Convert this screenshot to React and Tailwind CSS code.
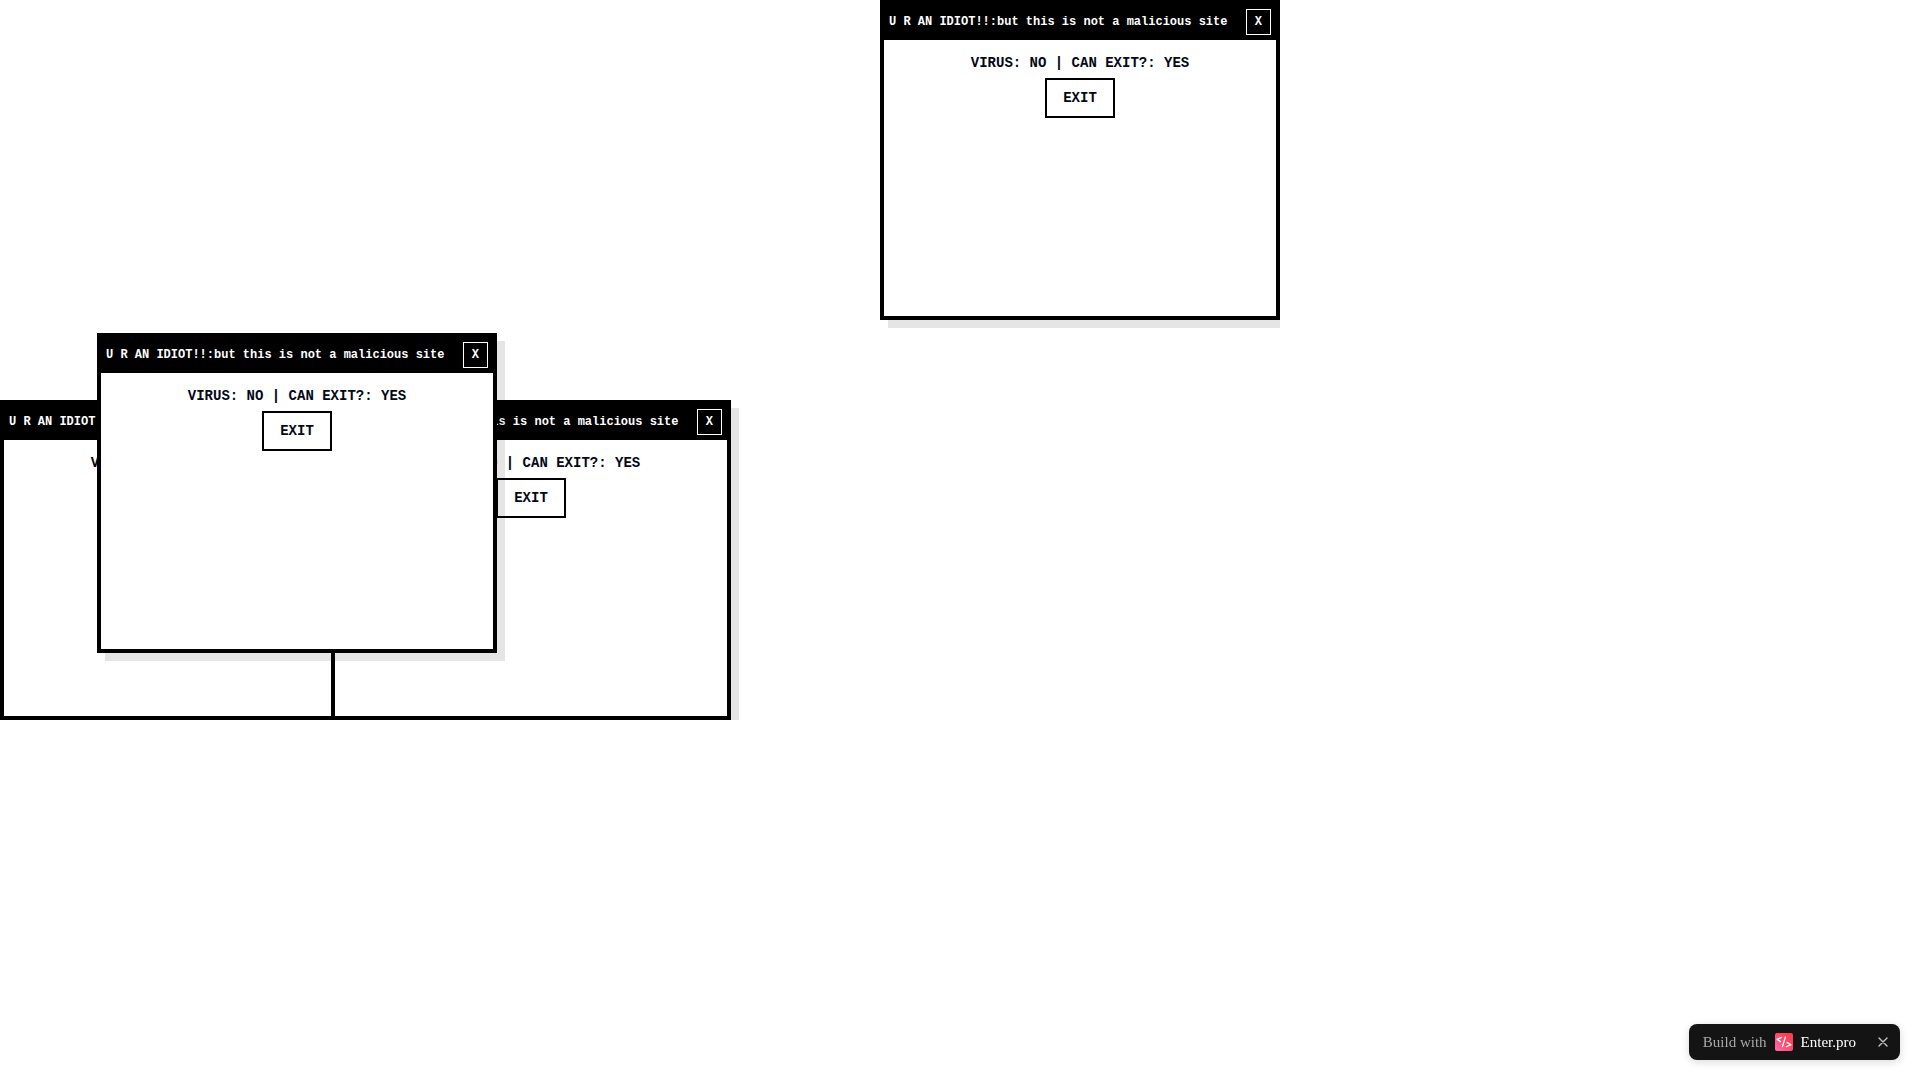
import React, { useState } from "react";

const POPUPS = [
  { id: 1, x: 0, y: 400 },
  { id: 2, x: 331, y: 400 },
  { id: 3, x: 97, y: 333 },
  { id: 4, x: 880, y: 0 },
];

const PopupWindow = ({ popup, onClose }) => {
  return (
    <section
      style={{ left: popup.x, top: popup.y }}
      className="absolute w-[400px] h-80 flex flex-col border-4 border-black bg-white shadow-[8px_8px_0_rgba(0,0,0,0.1)]"
    >
      <header className="flex items-center justify-between bg-black p-[5px] text-xs font-bold text-white">
        <h2>U R AN IDIOT!!:but this is not a malicious site</h2>
        <button
          type="button"
          onClick={onClose}
          className="border border-white px-2 py-1"
        >
          X
        </button>
      </header>
      <div className="flex-1 flex flex-col items-center gap-1 p-3 text-sm font-bold text-[#020817]">
        <p className="leading-[22px]">VIRUS: NO | CAN EXIT?: YES</p>
        <button
          type="button"
          onClick={onClose}
          className="border-2 border-black bg-white px-4 py-2"
        >
          EXIT
        </button>
      </div>
    </section>
  );
};

const EnterLogo = () => (
  <svg viewBox="0 0 18 18" className="size-[18px]" aria-hidden="true">
    <defs>
      <linearGradient id="enter-logo" x1="0" y1="1" x2="1" y2="0">
        <stop offset="0" stopColor="#ff6fb0" />
        <stop offset="0.5" stopColor="#ff4b6e" />
        <stop offset="1" stopColor="#ff3b3b" />
      </linearGradient>
    </defs>
    <rect width="18" height="18" rx="2" fill="url(#enter-logo)" />
    <g
      fill="none"
      stroke="#fff"
      strokeWidth="1.3"
      strokeLinecap="round"
      strokeLinejoin="round"
    >
      <path d="M6.4 4.4 2.2 6.4l3.4 2.2" />
      <path d="M10.4 4 7.4 13.6" />
      <path d="m12 9.4 3.8 2.4-4.4 1.8" />
    </g>
  </svg>
);

const BuildBadge = ({ onClose }) => (
  <aside className="fixed right-5 bottom-5 h-9 flex items-center rounded-lg bg-[#141414] pl-3.5 pr-[11px] font-['Liberation_Serif',serif] text-[15px] shadow-[0_2px_8px_rgba(0,0,0,0.15)]">
    <a href="#enter" className="flex items-center gap-2 text-white">
      <span className="text-[#a8a8a8]">Build with</span>
      <EnterLogo />
      <span>Enter.pro</span>
    </a>
    <button
      type="button"
      onClick={onClose}
      aria-label="Close"
      className="ml-[21px] size-3 flex items-center justify-center text-[#c4c4c4]"
    >
      <svg viewBox="0 0 12 12" className="size-3" aria-hidden="true">
        <path
          d="m2 2 8 8M10 2l-8 8"
          stroke="currentColor"
          strokeWidth="1.4"
          strokeLinecap="round"
        />
      </svg>
    </button>
  </aside>
);

const App = () => {
  const [popups, setPopups] = useState(POPUPS);
  const [showBadge, setShowBadge] = useState(true);

  const closePopup = (id) => {
    setPopups((current) => current.filter((popup) => popup.id !== id));
  };

  return (
    <div className="min-h-screen bg-white">
      <main className="relative w-[1280px] h-[720px] overflow-hidden font-['Liberation_Mono',monospace]">
        {popups.map((popup) => (
          <PopupWindow
            key={popup.id}
            popup={popup}
            onClose={() => closePopup(popup.id)}
          />
        ))}
      </main>
      {showBadge && <BuildBadge onClose={() => setShowBadge(false)} />}
    </div>
  );
};

export default App;
